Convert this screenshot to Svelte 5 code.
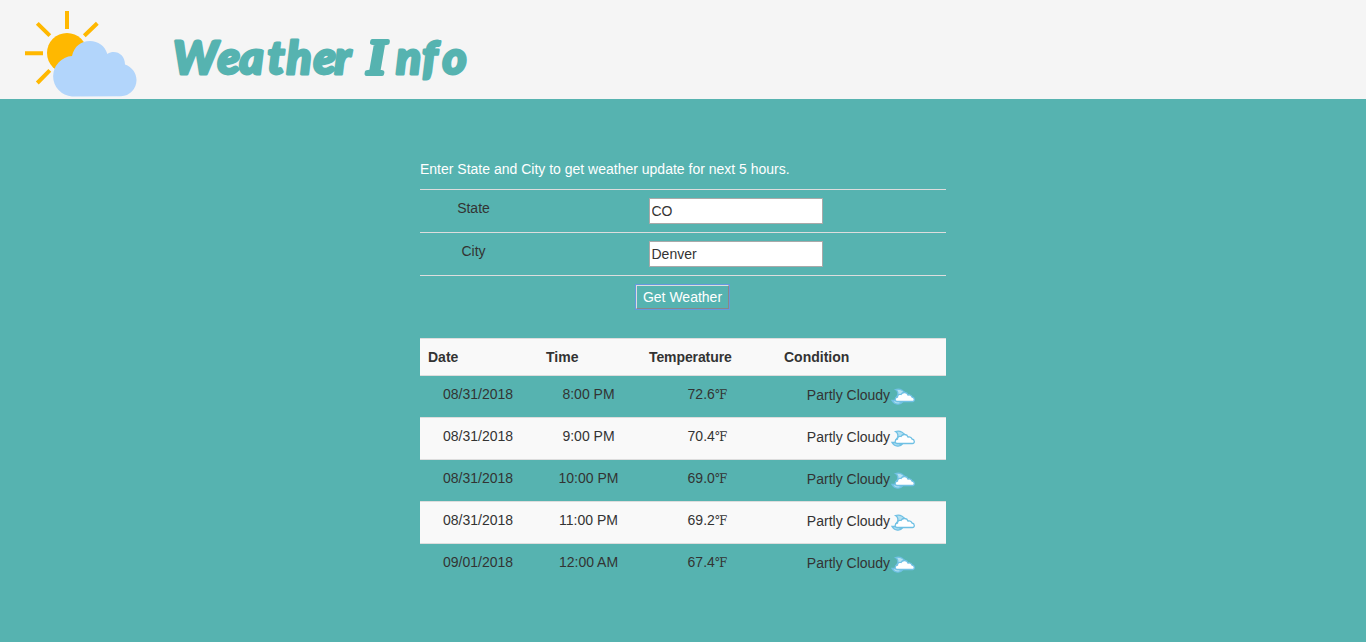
<script>
  let region = $state('CO');
  let city = $state('Denver');
  const hours = [
    { date: '08/31/2018', time: '8:00 PM', temp: '72.6' },
    { date: '08/31/2018', time: '9:00 PM', temp: '70.4' },
    { date: '08/31/2018', time: '10:00 PM', temp: '69.0' },
    { date: '08/31/2018', time: '11:00 PM', temp: '69.2' },
    { date: '09/01/2018', time: '12:00 AM', temp: '67.4' }
  ];
</script>

<header>
  <svg class="logo" width="160" height="99" viewBox="0 0 160 99" aria-hidden="true">
    <g stroke="#ffb800" stroke-width="4" fill="none">
      <path d="M67 11V29M25 53.2H43M37.3 23.3L49.8 35.7M97.3 23.3L84.3 35.7M49.8 70.3L37.3 83" />
    </g>
    <circle cx="67" cy="53" r="20" fill="#ffb800" />
    <path fill="#b2d5fb" d="M72 96.500A20.300 20.300 0 0 1 72 56C74 46.500 81 41 90 41C98 41 105 46 107.400 54C115 49 125 54 125 64.500C132 67 136.500 73 136.500 80A16.300 16.300 0 0 1 121 96.300Z" />
  </svg>
  <svg class="title" width="320" height="99" viewBox="160 0 320 99">
    <text y="73.500" x="173 217.500 239.500 267.500 286.500 313.500 334.500 352">Weather <tspan class="cap" x="367">I</tspan><tspan x="396 422 442.500">nfo</tspan></text>
  </svg>
</header>

<main>
  <p>Enter State and City to get weather update for next 5 hours.</p>
  <form onsubmit={(e) => e.preventDefault()}>
    <div class="field"><label for="region">State</label><div><input id="region" bind:value={region} /></div></div>
    <div class="field"><label for="city">City</label><div><input id="city" bind:value={city} /></div></div>
    <div class="action"><button type="submit">Get Weather</button></div>
  </form>
  <table>
    <thead>
      <tr><th>Date</th><th>Time</th><th>Temperature</th><th>Condition</th></tr>
    </thead>
    <tbody>
      {#each hours as h}
        <tr>
          <td>{h.date}</td>
          <td>{h.time}</td>
          <td>{h.temp}<span class="unit">℉</span></td>
          <td>
            <div class="cond">
              <span>Partly Cloudy</span>
              <svg width="25" height="25" viewBox="0 0 25 25" aria-hidden="true">
                <path d="M2 16.500H8L10 18H12.500C10.500 21 4.500 21 2 16.500Z" fill="#a9dcf0" />
                <path d="M5.500 5.500C9 4.500 13 6 15.500 9.500L10 13L6.500 13C9 10.500 8 7 5.500 5.500Z" fill="#b5e1f2" />
                <path d="M7 17.500C4.500 17 4.500 13.500 7.500 13C7.500 10.500 9.500 10 11 10.500C12.500 7.500 17 8 18 11C20 10.500 21.500 11.500 22 13C25 13.500 25 17.500 22.500 17.500Z" fill="#fff" />
              </svg>
            </div>
          </td>
        </tr>
      {/each}
    </tbody>
  </table>
</main>

<style>
  :global(body) {
    margin: 0;
    background: #56b3b0;
    font: 14px/20px "Liberation Sans", Arial, sans-serif;
    color: #333;
  }
  header {
    display: flex;
    height: 99px;
    background: #f5f5f5;
  }
  .title text {
    font: italic 900 46px Lato, sans-serif;
    fill: #56b3b0;
    stroke: #56b3b0;
    stroke-width: 2.8px;
    stroke-linejoin: round;
  }
  .title .cap {
    font: italic 700 50px "Liberation Serif", serif;
    stroke-width: 4px;
  }
  main {
    width: 526px;
    margin: 0 auto;
    padding-top: 60px;
  }
  p {
    margin: 0 0 10px;
    color: #fff;
  }
  .field {
    display: grid;
    grid-template-columns: 107px 1fr;
    height: 42px;
    border-top: 1px solid #ddd;
    text-align: center;
  }
  label {
    padding-top: 8px;
  }
  .field div {
    display: flex;
    justify-content: center;
    padding: 8px 2px 0 0;
  }
  input {
    box-sizing: border-box;
    width: 174px;
    height: 26px;
    padding: 1px 1px 1px 2px;
    border: 1px solid #a9a9a9;
    border-radius: 0;
    background: #fff;
    color: #333;
    font: inherit;
  }
  .action {
    display: flex;
    justify-content: center;
    height: 53px;
    padding-top: 9px;
    border-top: 1px solid #ddd;
  }
  button {
    box-sizing: border-box;
    width: 93px;
    height: 24px;
    padding: 0;
    margin: 0 1px 0 0;
    border: 1px solid;
    border-color: #ddd #888 #888 #ddd;
    border-radius: 0;
    background: transparent;
    color: #fff;
    font: inherit;
    line-height: 22px;
    box-shadow: 0 0 0 1px #6499df;
  }
  table {
    width: 526px;
    table-layout: fixed;
    border-collapse: collapse;
    border-spacing: 0;
  }
  th, td {
    box-sizing: border-box;
    padding: 8px;
    border-top: 1px solid #ddd;
    text-align: center;
    vertical-align: top;
  }
  th {
    height: 37px;
    text-align: left;
  }
  td {
    height: 42px;
    padding-right: 10px;
  }
  td:last-child {
    padding-right: 8px;
  }
  th:nth-child(1) { width: 118px; }
  th:nth-child(2) { width: 103px; }
  th:nth-child(3) { width: 135px; letter-spacing: -0.1px; }
  thead tr, tbody tr:nth-child(even) {
    background: #f9f9f9;
  }
  .unit {
    display: inline-block;
    font: 12px/12px "DejaVu Serif", serif;
    transform: scaleY(1.12);
    transform-origin: 0 11px;
  }
  .cond {
    display: flex;
    justify-content: center;
    height: 25px;
  }
  .cond span {
    padding-top: 1px;
  }
  .cond path {
    stroke: #6fc0e4;
    stroke-width: 1.3;
  }
</style>
